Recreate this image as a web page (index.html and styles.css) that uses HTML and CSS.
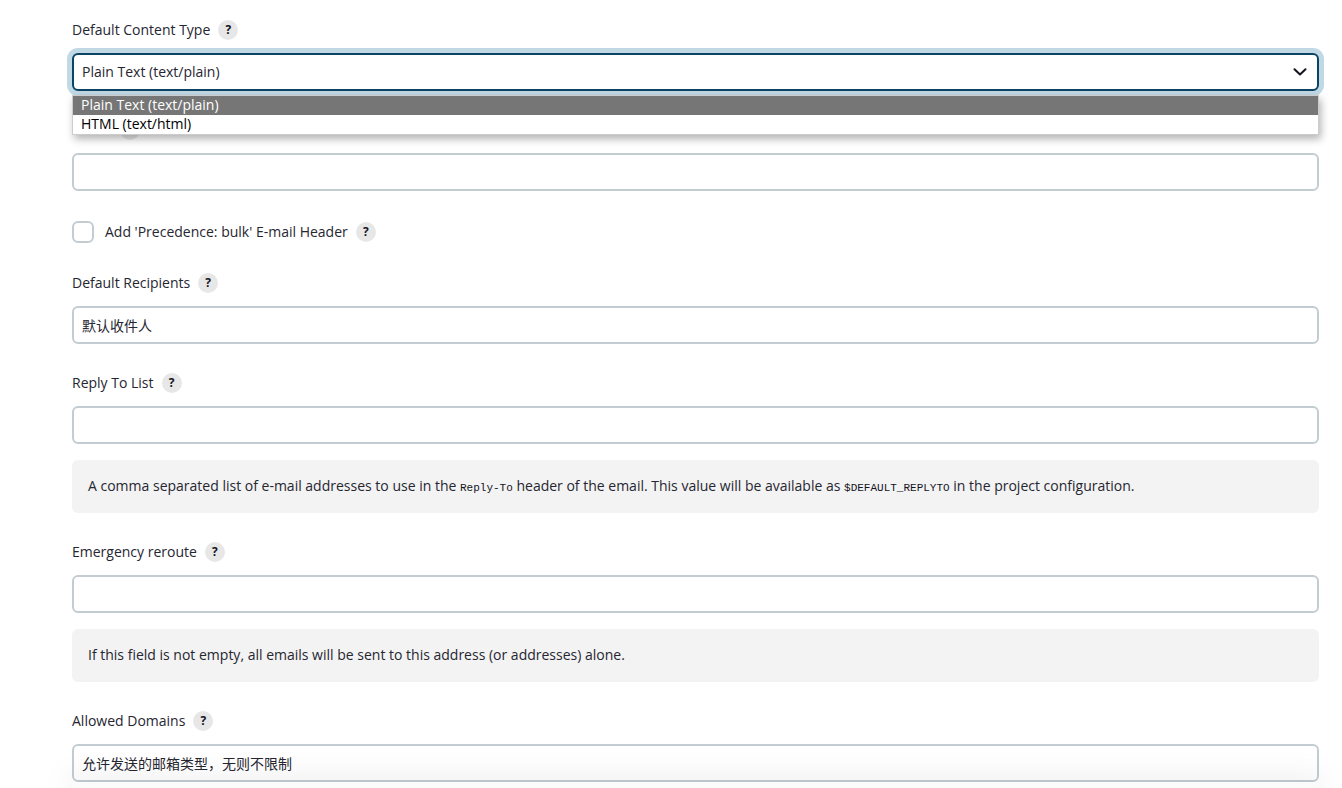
FILE: index.html
```html
<!DOCTYPE html>
<html lang="en">
<head>
<meta charset="utf-8">
<title>E-mail Notification</title>
<link rel="stylesheet" href="styles.css">
</head>
<body>
<form class="form">
  <div class="field">
    <div class="label-row"><label for="content-type">Default Content Type</label><button type="button" class="help">?</button></div>
    <div class="select-wrap">
      <select id="content-type" class="control select">
        <option selected>Plain Text (text/plain)</option>
        <option>HTML (text/html)</option>
      </select>
      <svg class="chevron" viewBox="0 0 14 8" aria-hidden="true"><path d="M1.5 1.2 7 6.5l5.5-5.3"/></svg>
      <ul class="options" role="listbox">
        <li class="option option-active" role="option" aria-selected="true">Plain Text (text/plain)</li>
        <li class="option" role="option">HTML (text/html)</li>
      </ul>
    </div>
  </div>
  <div class="field">
    <div class="label-row"><label for="list-id">List ID</label><button type="button" class="help">?</button></div>
    <input id="list-id" class="control" type="text">
  </div>
  <div class="check-row">
    <input id="precedence" class="checkbox" type="checkbox">
    <label for="precedence">Add 'Precedence: bulk' E-mail Header</label><button type="button" class="help">?</button>
  </div>
  <div class="field">
    <div class="label-row"><label for="recipients">Default Recipients</label><button type="button" class="help">?</button></div>
    <input id="recipients" class="control" type="text" value="默认收件人">
  </div>
  <div class="field">
    <div class="label-row"><label for="reply-to">Reply To List</label><button type="button" class="help">?</button></div>
    <input id="reply-to" class="control" type="text">
    <p class="note">A comma separated list of e-mail addresses to use in the <code>Reply-To</code> header of the email. This value will be available as <code>$DEFAULT_REPLYTO</code> in the project configuration.</p>
  </div>
  <div class="field">
    <div class="label-row"><label for="reroute">Emergency reroute</label><button type="button" class="help">?</button></div>
    <input id="reroute" class="control" type="text">
    <p class="note">If this field is not empty, all emails will be sent to this address (or addresses) alone.</p>
  </div>
  <div class="field">
    <div class="label-row"><label for="domains">Allowed Domains</label><button type="button" class="help">?</button></div>
    <input id="domains" class="control" type="text" value="允许发送的邮箱类型，无则不限制">
  </div>
</form>
<div class="bottom-bar"></div>
</body>
</html>
```
FILE: styles.css
```css
* { box-sizing: border-box; }

body {
  margin: 0;
  height: 100vh;
  overflow: hidden;
  background: #fff;
  color: #262631;
  font: 14px/20px "Open Sans", "Noto Sans CJK SC", sans-serif;
}

.form {
  display: flex;
  flex-direction: column;
  gap: 29px;
  padding: 20px 23px 0 72px;
}

.label-row {
  display: flex;
  align-items: center;
  gap: 8px;
  margin-bottom: 13px;
}

.help {
  width: 20px;
  height: 20px;
  padding: 0;
  border: 0;
  border-radius: 50%;
  background: #e7e7e7;
  color: #14141f;
  font: bold 12px/20px "Open Sans", sans-serif;
  text-align: center;
}

.control {
  display: block;
  width: 100%;
  height: 38px;
  padding: 0 8px;
  border: 2px solid #c3cdd1;
  border-radius: 6px;
  background: #fff;
  color: inherit;
  font: inherit;
}

.select-wrap { position: relative; }

.select {
  appearance: none;
  border-color: #0b4464;
  box-shadow: 0 0 0 5px #c1d8e5;
}

.chevron {
  position: absolute;
  top: 15px;
  right: 12px;
  width: 14px;
  height: 8px;
  fill: none;
  stroke: #14141f;
  stroke-width: 2;
  stroke-linecap: round;
  stroke-linejoin: round;
}

.options {
  position: absolute;
  top: 42px;
  left: 0;
  right: 0;
  z-index: 1;
  margin: 0;
  padding: 0;
  border: 1px solid #ccc;
  background: #fff;
  box-shadow: 2px 4px 8px rgba(0, 0, 0, 0.3);
  color: #000;
  list-style: none;
}

.option {
  padding: 0 8px 2px;
  line-height: 17px;
}

.option-active {
  background: #767676;
  color: #fff;
}

.check-row {
  display: flex;
  align-items: center;
  gap: 8px;
  height: 24px;
}

.checkbox {
  appearance: none;
  width: 22px;
  height: 22px;
  margin: 0 3px 0 0;
  border: 2px solid #c3cdd1;
  border-radius: 6px;
  background: #fff;
}

.note {
  margin: 16px 0 0;
  padding: 16px 16px 17px;
  border-radius: 6px;
  background: #f3f3f3;
}

.note code {
  color: #14141f;
  font: 11px/16px "Liberation Mono", monospace;
}

.bottom-bar {
  position: fixed;
  left: 72px;
  right: 23px;
  bottom: 0;
  height: 6px;
  background: #fbfbfb;
  box-shadow: 0 0 30px 4px rgba(0, 0, 0, 0.1);
}
```
